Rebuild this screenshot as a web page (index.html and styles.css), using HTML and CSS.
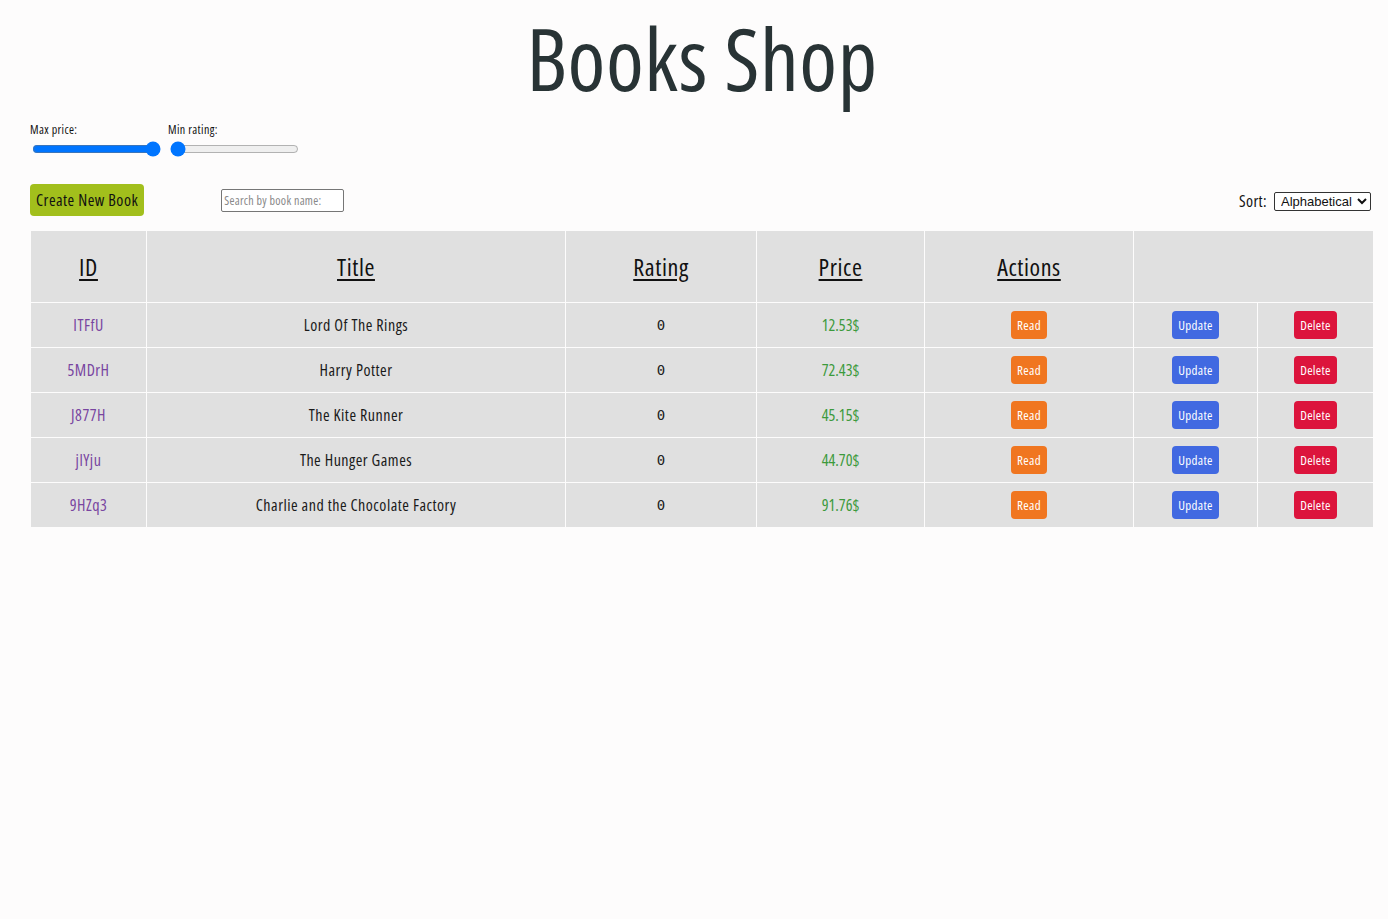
FILE: index.html
```html
<!DOCTYPE html>
<html lang="en">
<head>
<meta charset="utf-8">
<title>Books Shop</title>
<link rel="stylesheet" href="styles.css">
</head>
<body>
<div class="page">
  <h1 class="title">Books Shop</h1>
  <div class="filters">
    <label class="filter">
      <span class="filter-label">Max price:</span>
      <input class="range" type="range" min="0" max="100" value="100">
    </label>
    <label class="filter">
      <span class="filter-label">Min rating:</span>
      <input class="range" type="range" min="0" max="10" value="0">
    </label>
  </div>
  <div class="toolbar">
    <button class="btn-create">Create New Book</button>
    <input class="search" type="text" placeholder="Search by book name:">
    <div class="sort">
      <span class="sort-label">Sort:</span>
      <select class="sort-select"><option>Alphabetical</option></select>
    </div>
  </div>
  <table class="books">
    <colgroup>
      <col class="c-id"><col class="c-title"><col class="c-rating"><col class="c-price"><col class="c-actions"><col class="c-update"><col class="c-delete">
    </colgroup>
    <thead>
      <tr><th>ID</th><th>Title</th><th>Rating</th><th>Price</th><th>Actions</th><th colspan="2" class="empty"></th></tr>
    </thead>
    <tbody>
      <tr><td class="id">ITFfU</td><td>Lord Of The Rings</td><td class="rating">0</td><td class="price">12.53$</td><td><button class="btn btn-read">Read</button></td><td><button class="btn btn-update">Update</button></td><td><button class="btn btn-delete">Delete</button></td></tr>
      <tr><td class="id">5MDrH</td><td>Harry Potter</td><td class="rating">0</td><td class="price">72.43$</td><td><button class="btn btn-read">Read</button></td><td><button class="btn btn-update">Update</button></td><td><button class="btn btn-delete">Delete</button></td></tr>
      <tr><td class="id">J877H</td><td>The Kite Runner</td><td class="rating">0</td><td class="price">45.15$</td><td><button class="btn btn-read">Read</button></td><td><button class="btn btn-update">Update</button></td><td><button class="btn btn-delete">Delete</button></td></tr>
      <tr><td class="id">jlYju</td><td>The Hunger Games</td><td class="rating">0</td><td class="price">44.70$</td><td><button class="btn btn-read">Read</button></td><td><button class="btn btn-update">Update</button></td><td><button class="btn btn-delete">Delete</button></td></tr>
      <tr><td class="id">9HZq3</td><td>Charlie and the Chocolate Factory</td><td class="rating">0</td><td class="price">91.76$</td><td><button class="btn btn-read">Read</button></td><td><button class="btn btn-update">Update</button></td><td><button class="btn btn-delete">Delete</button></td></tr>
    </tbody>
  </table>
</div>
</body>
</html>
```

FILE: styles.css
```css
html, body {
  margin: 0;
  padding: 0;
  background: #fdfcfc;
}
body {
  font-family: "Open Sans", "Noto Sans", sans-serif;
  font-stretch: 75%;
  letter-spacing: 0.4px;
  color: #111;
}
.page {
  padding: 0 14px 0 30px;
}
.title {
  margin: 0;
  padding-top: 11px;
  height: 104px;
  text-align: center;
  font-family: "Open Sans", "Noto Sans", sans-serif;
  font-stretch: 75%;
  font-size: 86px;
  font-weight: 400;
  line-height: 94px;
  letter-spacing: 0.5px;
  color: #283335;
}
.filters {
  display: flex;
  gap: 5px;
  margin-top: 8px;
}
.filter {
  display: flex;
  flex-direction: column;
  align-items: flex-start;
}
.filter-label {
  font-size: 12px;
  line-height: 14px;
}
.range {
  margin: 4px 2px 0 2px;
  width: 129px;
  accent-color: #0075ff;
}
.toolbar {
  display: flex;
  align-items: center;
  margin-top: 27px;
  height: 32px;
}
.btn-create {
  height: 32px;
  padding: 0 6px;
  border: none;
  border-radius: 4px;
  background: #a2bf1c;
  color: #111;
  font-family: inherit;
  font-stretch: inherit;
  letter-spacing: 0.5px;
  font-size: 16px;
}
.search {
  margin-left: 77px;
  width: 117px;
  height: 21px;
  padding: 0 2px;
  border: 1px solid #767676;
  border-radius: 2px;
  font-family: inherit;
  font-stretch: inherit;
  letter-spacing: 0.3px;
  font-size: 12px;
  background: #fff;
}
.search::placeholder {
  color: #888;
}
.sort {
  margin-left: auto;
  display: flex;
  align-items: center;
  gap: 7px;
  padding-top: 2px;
  margin-right: 3px;
}
.sort-label {
  font-size: 16px;
}
.sort-select {
  font-family: "Liberation Sans", Arial, sans-serif;
  font-stretch: normal;
  letter-spacing: 0;
  font-size: 13px;
  width: 97px;
  height: 19px;
  padding: 0 0 0 2px;
  border: 1px solid #333;
  border-radius: 2px;
  background: #fff;
  color: #111;
}
.books {
  margin-top: 14px;
  width: 1344px;
  table-layout: fixed;
  border-collapse: separate;
  border-spacing: 1px;
  background: #fdfcfc;
}
.c-id { width: 115px; }
.c-title { width: 418px; }
.c-rating { width: 190px; }
.c-price { width: 167px; }
.c-actions { width: 208px; }
.c-update { width: 123px; }
.c-delete { width: 115px; }
.books th, .books td {
  background: #e0e0e0;
  text-align: center;
  padding: 0;
}
.books th {
  height: 71px;
  font-size: 24px;
  font-weight: normal;
  letter-spacing: 0.6px;
  text-decoration: underline;
  text-underline-offset: 3px;
  color: #111;
}
.books td {
  height: 44px;
  font-size: 16px;
  letter-spacing: 0.5px;
  color: #1a1a1a;
}
.books td.id {
  color: #7845a0;
}
.books td.rating {
  font-family: "DejaVu Sans Mono", monospace;
  font-stretch: normal;
  letter-spacing: 0;
  font-size: 14px;
  color: #222;
}
.books td.price {
  color: #3c9a3c;
  letter-spacing: 0;
}
.btn {
  height: 28px;
  padding: 0 6px;
  border: none;
  border-radius: 4px;
  color: #fff;
  font-family: inherit;
  font-stretch: inherit;
  letter-spacing: 0.3px;
  font-size: 13px;
}
.btn-read { background: #f07620; }
.btn-update { background: #4169e1; }
.btn-delete { background: #dc143c; }
```
